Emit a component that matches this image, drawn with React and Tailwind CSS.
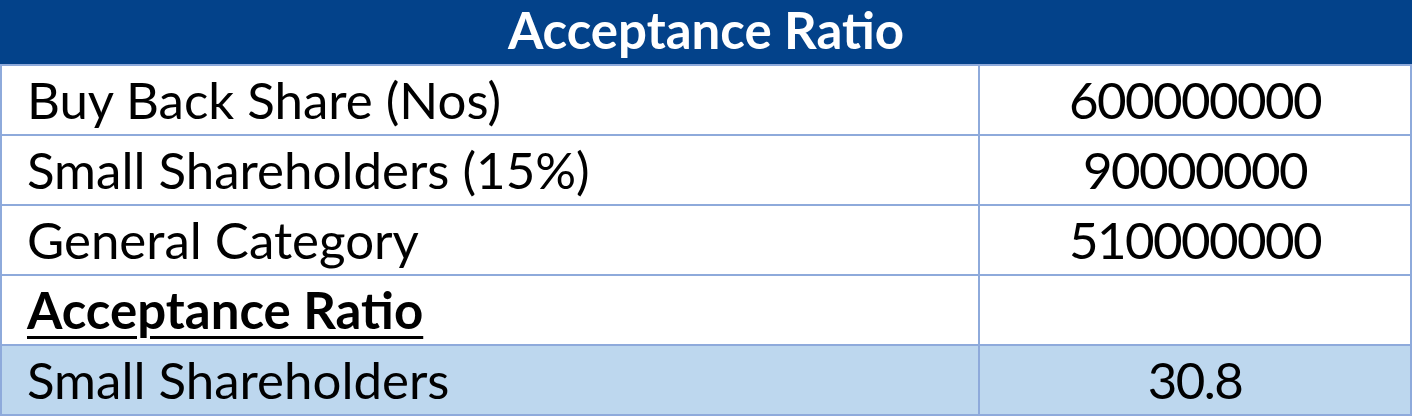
import React from 'react';

const rows = [
  { label: 'Buy Back Share (Nos)', value: '600000000' },
  { label: 'Small Shareholders (15%)', value: '90000000' },
  { label: 'General Category', value: '510000000' },
  { label: 'Acceptance Ratio', value: '', heading: true },
  { label: 'Small Shareholders', value: '30.8', shaded: true },
];

export default function App() {
  return (
    <div className="w-[1412px] h-[416px] bg-white font-['Lato','Liberation_Sans',sans-serif] text-black">
      <div className="h-[64px] bg-[#03428a] flex items-start justify-center">
        <h1 className="text-[51px] leading-[60px] font-bold text-white">Acceptance Ratio</h1>
      </div>
      <div className="border-x-2 border-b-2 border-[#8eaadb]">
        {rows.map((row, i) => (
          <div
            key={i}
            className={`grid grid-cols-[978px_1fr] h-[70px] border-t-2 border-[#8eaadb] ${row.shaded ? 'bg-[#bdd7ee]' : ''}`}
          >
            <div className="flex items-start pt-[11px] pl-[25px] border-r-2 border-[#8eaadb]">
              {row.heading ? (
                <span className="text-[51px] leading-[46px] font-bold underline decoration-[3px] underline-offset-[7px]">
                  {row.label}
                </span>
              ) : (
                <span className="text-[51px] leading-[46px]">{row.label}</span>
              )}
            </div>
            <div className="flex items-start pt-[11px] justify-center">
              <span className="text-[51px] leading-[46px] tracking-[-1.6px]">{row.value}</span>
            </div>
          </div>
        ))}
      </div>
    </div>
  );
}
